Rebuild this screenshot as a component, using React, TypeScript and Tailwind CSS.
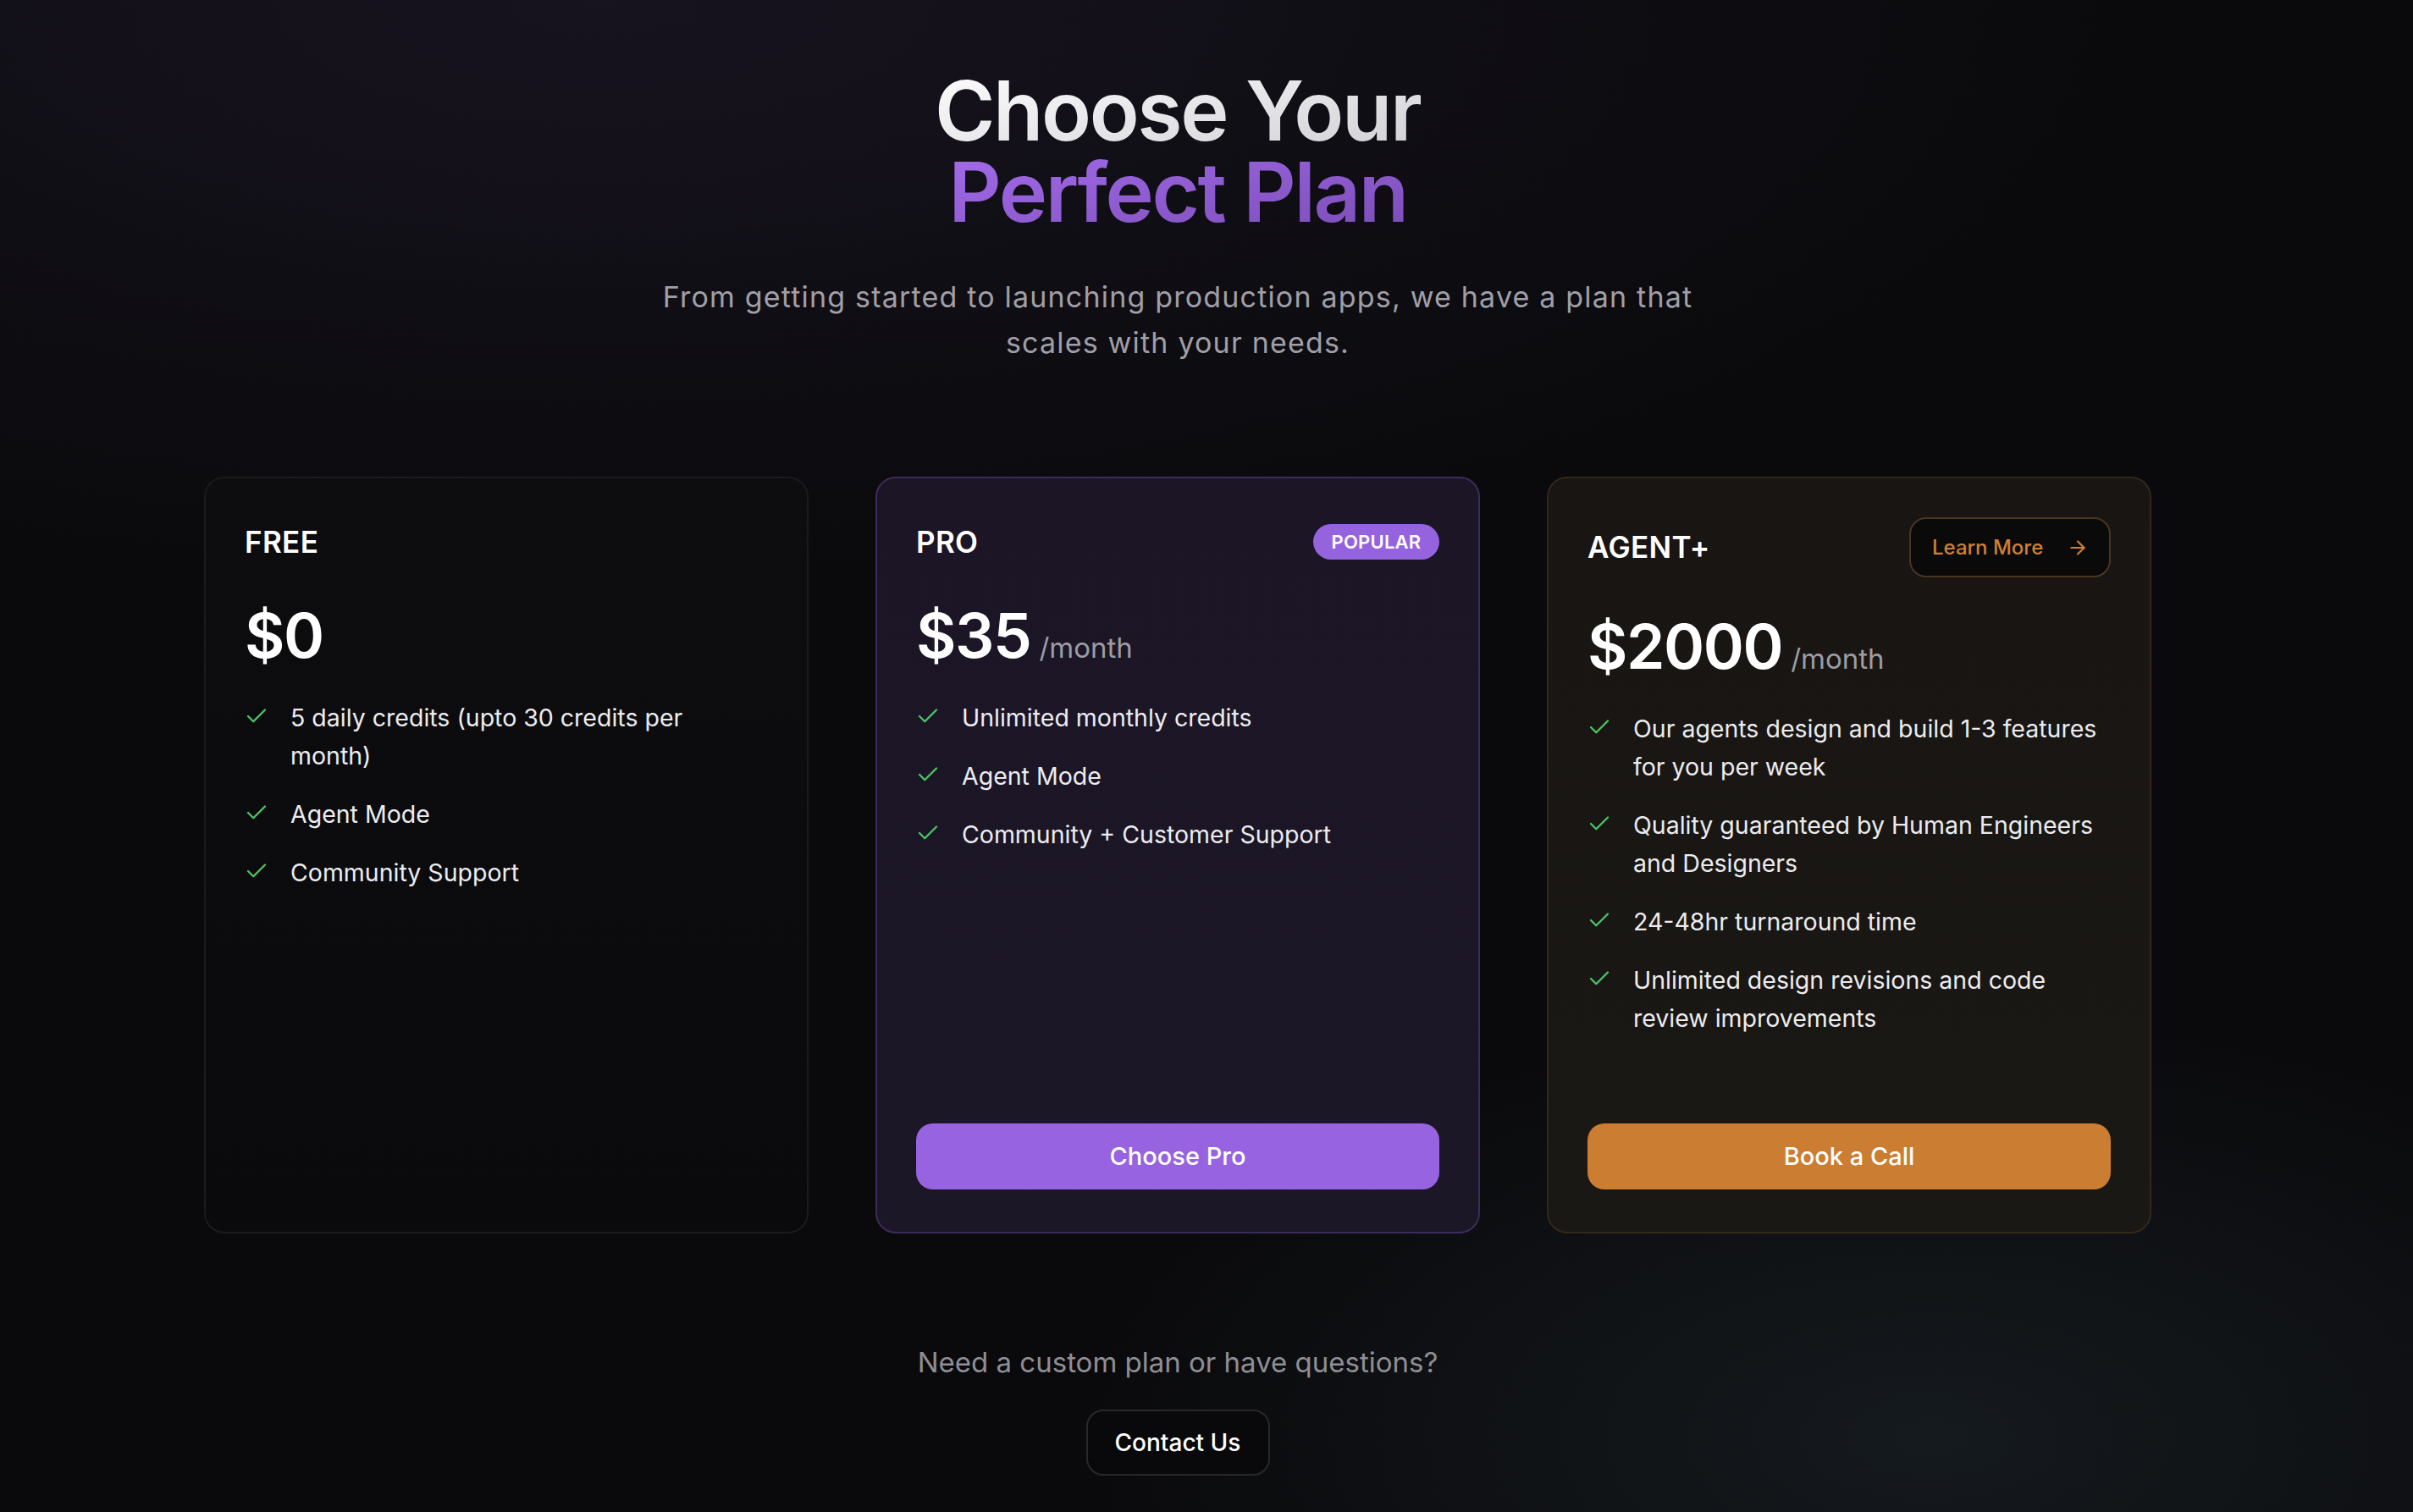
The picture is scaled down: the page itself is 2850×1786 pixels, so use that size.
import React from "react";
import { Check, ArrowRight } from "lucide-react";

type Plan = {
  name: string;
  price: string;
  per?: boolean;
  features: string[];
  kind: "free" | "pro" | "agent";
};

const plans: Plan[] = [
  {
    name: "FREE",
    price: "$0",
    kind: "free",
    features: ["5 daily credits (upto 30 credits per month)", "Agent Mode", "Community Support"],
  },
  {
    name: "PRO",
    price: "$35",
    per: true,
    kind: "pro",
    features: ["Unlimited monthly credits", "Agent Mode", "Community + Customer Support"],
  },
  {
    name: "AGENT+",
    price: "$2000",
    per: true,
    kind: "agent",
    features: [
      "Our agents design and build 1-3 features for you per week",
      "Quality guaranteed by Human Engineers and Designers",
      "24-48hr turnaround time",
      "Unlimited design revisions and code review improvements",
    ],
  },
];

function Card({ plan }: { plan: Plan }) {
  const cardCls =
    plan.kind === "pro"
      ? "border-[#3d2b5b] bg-gradient-to-b from-[#1b1526] to-[#1c1726]"
      : plan.kind === "agent"
      ? "border-[#33281a] bg-gradient-to-b from-[#181512] to-[#1a1815]"
      : "border-[#1b1b1f] bg-gradient-to-b from-[#0d0d10] to-[#0a0a0c]";
  return (
    <div className={`flex h-[894px] w-[714px] flex-col rounded-[24px] border-2 pl-[46px] pr-[46px] pt-[46px] pb-[50px] ${cardCls}`}>
      <div className="flex min-h-[58px] items-center justify-between">
        <div className="text-[35px] font-semibold leading-none tracking-[0.01em] text-white">{plan.name}</div>
        {plan.kind === "pro" && (
          <div className="flex h-[42px] w-[149px] items-center justify-center rounded-full bg-[#9663df] text-[22px] font-semibold tracking-[0.01em] text-white">
            POPULAR
          </div>
        )}
        {plan.kind === "agent" && (
          <div className="flex h-[71px] w-[238px] items-center gap-[28px] rounded-[20px] border-2 border-[#4a3520] bg-[#0b0a0b] pl-[25px] text-[24px] font-medium text-[#cf8033]">
            <span>Learn More</span>
            <ArrowRight size={26} strokeWidth={2} />
          </div>
        )}
      </div>
      <div className="mt-[45px] flex h-[88px] items-baseline">
        <span className="text-[73px] font-semibold leading-none tracking-[-0.02em] text-white">{plan.price}</span>
        {plan.per && <span className="ml-[10px] text-[33px] leading-none text-[#9d9ca3]">/month</span>}
      </div>
      <ul className="mt-[23px] flex flex-col gap-[24px]">
        {plan.features.map((f) => (
          <li key={f} className="flex gap-[25px]">
            <div className="flex h-[44px] shrink-0 items-center">
              <Check size={30} strokeWidth={1.9} className="-mt-[3px] -ml-[1px] text-[#4cc466]" />
            </div>
            <span className="text-[28.5px] leading-[45px] text-[#ececef]">{f}</span>
          </li>
        ))}
      </ul>
      {plan.kind === "pro" && (
        <button className="mt-auto h-[78px] w-full rounded-[20px] bg-[#9763e0] text-[29px] font-medium text-white">
          Choose Pro
        </button>
      )}
      {plan.kind === "agent" && (
        <button className="mt-auto h-[78px] w-full rounded-[20px] bg-[#cb7d31] text-[29px] font-medium text-white">
          Book a Call
        </button>
      )}
    </div>
  );
}

export default function App() {
  return (
    <div
      className="min-h-screen w-full bg-[#0a0a0c] bg-[radial-gradient(ellipse_90%_55%_at_25%_0%,#17131f_0%,transparent_70%),radial-gradient(ellipse_50%_40%_at_80%_95%,#151a1e_0%,transparent_70%)]"
      style={{ fontFamily: "Inter, 'Liberation Sans', sans-serif" }}
    >
      <div className="flex w-[2782px] flex-col items-center pt-[83px] pb-[43px]">
        <h1 className="text-center text-[97px] font-semibold leading-[96px] tracking-[-0.025em]">
          <span className="bg-gradient-to-br from-white to-[#cfcfd3] bg-clip-text text-transparent">Choose Your</span>
          <br />
          <span className="bg-gradient-to-br from-[#a56cec] to-[#7a4cb6] bg-clip-text text-transparent">Perfect Plan</span>
        </h1>
        <p className="mt-[49px] max-w-[1270px] text-center text-[34px] leading-[54px] tracking-[0.035em] text-[#a09fa7]">
          From getting started to launching production apps, we have a plan that scales with your needs.
        </p>
        <div className="mt-[131px] flex gap-[79px]">
          {plans.map((p) => (
            <Card key={p.name} plan={p} />
          ))}
        </div>
        <p className="mt-[125px] text-[33px] leading-[54px] text-[#8f8e95]">Need a custom plan or have questions?</p>
        <button className="mt-[29px] h-[78px] w-[217px] rounded-[20px] border-2 border-[#28282c] bg-[#09090b] text-[28px] font-medium text-white">
          Contact Us
        </button>
      </div>
    </div>
  );
}
